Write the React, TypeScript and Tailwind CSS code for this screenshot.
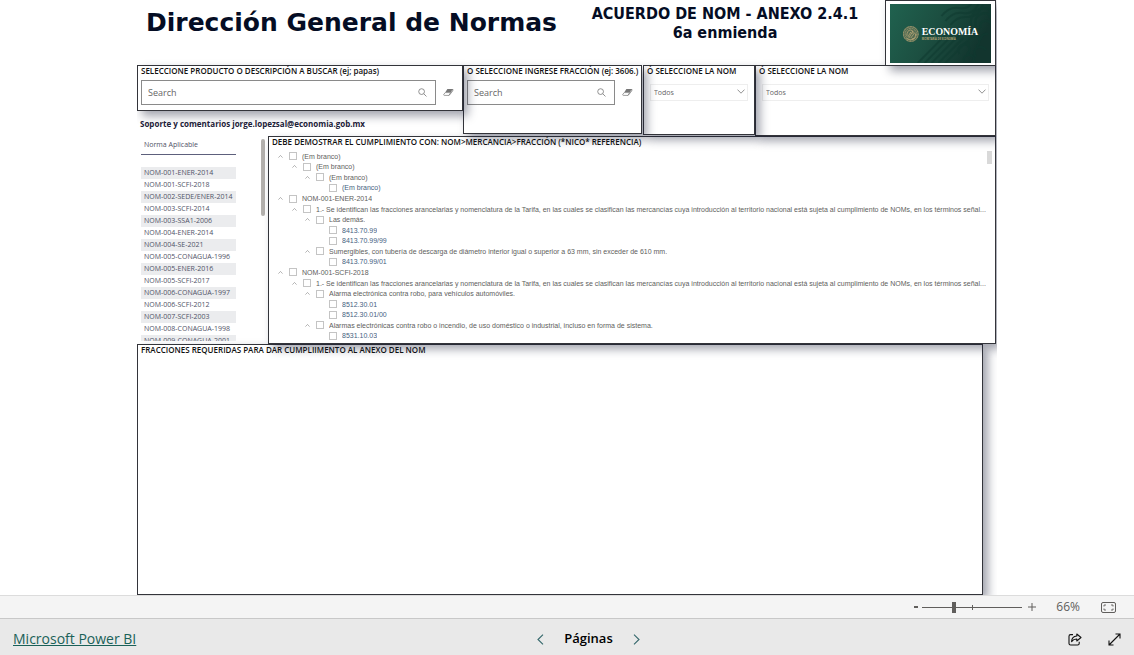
import { useState } from 'react'
import clsx from 'clsx'

interface TreeRow {
  id: number
  level: number
  label: string
  leaf?: boolean
}

const INTRO =
  '1.- Se identifican las fracciones arancelarias y nomenclatura de la Tarifa, en las cuales se clasifican las mercancías cuya introducción al territorio nacional está sujeta al cumplimiento de NOMs, en los términos señal...'

const TREE: TreeRow[] = [
  { id: 1, level: 0, label: '(Em branco)' },
  { id: 2, level: 1, label: '(Em branco)' },
  { id: 3, level: 2, label: '(Em branco)' },
  { id: 4, level: 3, label: '(Em branco)', leaf: true },
  { id: 5, level: 0, label: 'NOM-001-ENER-2014' },
  { id: 6, level: 1, label: INTRO },
  { id: 7, level: 2, label: 'Las demás.' },
  { id: 8, level: 3, label: '8413.70.99', leaf: true },
  { id: 9, level: 3, label: '8413.70.99/99', leaf: true },
  {
    id: 10,
    level: 2,
    label: 'Sumergibles, con tubería de descarga de diámetro interior igual o superior a 63 mm, sin exceder de 610 mm.',
  },
  { id: 11, level: 3, label: '8413.70.99/01', leaf: true },
  { id: 12, level: 0, label: 'NOM-001-SCFI-2018' },
  { id: 13, level: 1, label: INTRO },
  { id: 14, level: 2, label: 'Alarma electrónica contra robo, para vehículos automóviles.' },
  { id: 15, level: 3, label: '8512.30.01', leaf: true },
  { id: 16, level: 3, label: '8512.30.01/00', leaf: true },
  {
    id: 17,
    level: 2,
    label: 'Alarmas electrónicas contra robo o incendio, de uso doméstico o industrial, incluso en forma de sistema.',
  },
  { id: 18, level: 3, label: '8531.10.03', leaf: true },
]

const NORMS = [
  'NOM-001-ENER-2014',
  'NOM-001-SCFI-2018',
  'NOM-002-SEDE/ENER-2014',
  'NOM-003-SCFI-2014',
  'NOM-003-SSA1-2006',
  'NOM-004-ENER-2014',
  'NOM-004-SE-2021',
  'NOM-005-CONAGUA-1996',
  'NOM-005-ENER-2016',
  'NOM-005-SCFI-2017',
  'NOM-006-CONAGUA-1997',
  'NOM-006-SCFI-2012',
  'NOM-007-SCFI-2003',
  'NOM-008-CONAGUA-1998',
  'NOM-009-CONAGUA-2001',
]

const INDENT = ['pl-0', 'pl-[14px]', 'pl-[27px]', 'pl-[40px]']

const PANEL = 'relative border border-[#33343a] bg-white shadow-[5px_5px_9px_rgba(20,24,50,0.4)]'
const PANEL_TITLE = 'font-["Open_Sans",sans-serif] text-[8px] leading-[10px] font-semibold whitespace-nowrap text-[#111]'

function SearchIcon() {
  return (
    <svg viewBox="0 0 10 10" className="size-[9px]" fill="none" stroke="#777" strokeWidth="0.9">
      <circle cx="4" cy="4" r="3.2" />
      <path d="M6.4 6.4 9.4 9.4" />
    </svg>
  )
}

function EraserIcon() {
  return (
    <svg viewBox="0 0 11 9" className="h-[9px] w-[11px]">
      <path d="M4.4 1h5.4L7.6 4.6H2.2z" fill="#777" />
      <path d="M2.2 4.6h5.4L6 7.4H1.2q-.8-.2-.4-1zM7.6 4.6 9.8 1v1.8L6.2 7.4" fill="#fff" stroke="#777" strokeWidth="0.7" />
    </svg>
  )
}

function Chevron({ className }: { className?: string }) {
  return (
    <svg viewBox="0 0 8 5" className={className} fill="none" stroke="currentColor" strokeWidth="0.8">
      <path d="M.5.6 4 4.2 7.5.6" />
    </svg>
  )
}

function SearchPanel({ title, id, className }: { title: string; id: string; className: string }) {
  const [value, setValue] = useState('')
  return (
    <section className={clsx(PANEL, 'pr-2 pl-[3px]', className)}>
      <label htmlFor={id} className={clsx(PANEL_TITLE, 'block')}>
        {title}
      </label>
      <div className="mt-1 flex items-center gap-[7px]">
        <div className="flex h-[25px] min-w-0 flex-1 items-center border border-[#8a8a8a] bg-white pr-2">
          <input
            id={id}
            value={value}
            onChange={(e) => setValue(e.target.value)}
            placeholder="Search"
            className="w-full min-w-0 flex-1 px-[6px] font-['Open_Sans',sans-serif] text-[9px] text-[#444] outline-none placeholder:text-[#666]"
          />
          <button type="button" aria-label="Search">
            <SearchIcon />
          </button>
        </div>
        <button type="button" aria-label="Clear" onClick={() => setValue('')}>
          <EraserIcon />
        </button>
      </div>
    </section>
  )
}

function SelectPanel({ title, id, className }: { title: string; id: string; className: string }) {
  return (
    <section className={clsx(PANEL, 'pr-[6px] pl-[3px]', className)}>
      <label htmlFor={id} className={clsx(PANEL_TITLE, 'block')}>
        {title}
      </label>
      <div className="relative mt-2 ml-[3px]">
        <select
          id={id}
          className="block h-[17px] w-full appearance-none border border-[#eeeeee] px-[3px] pt-px font-['Open_Sans',sans-serif] text-[7px] text-[#666] outline-none"
        >
          <option>Todos</option>
        </select>
        <Chevron className="pointer-events-none absolute top-[5px] right-[3px] h-[5px] w-2 text-[#777]" />
      </div>
    </section>
  )
}

function Logo() {
  return (
    <svg viewBox="0 0 102 59" className="block h-full w-full" preserveAspectRatio="none">
      <defs>
        <linearGradient id="green" x1="0" x2="1" y1="0" y2="0.3">
          <stop offset="0" stopColor="#20624f" />
          <stop offset="0.5" stopColor="#1c4f41" />
          <stop offset="1" stopColor="#12352e" />
        </linearGradient>
      </defs>
      <rect width="102" height="59" fill="url(#green)" />
      <g fill="none" stroke="#0f3a30" strokeWidth="2" opacity="0.55">
        <path d="M28 59 62 25M35 59 66 28M42 59 70 31M49 59 74 34M56 59 78 37" />
        <path d="M52 12q8-10 18-8t14-8M56 17q8-10 18-8t16-10M61 21q7-9 17-8t16-12" />
        <path d="M82 22q-2-14 9-17t10 6M87 23q-3-10 5-13t9 4M92 24q-2-6 3-7t7 3" />
        <path d="M70 50q-3-7 3-9t7 3-3 6M80 42q-3-7 3-9t7 3-3 6M75 58q-2-6 4-7t6 7M87 53q-4-6 1-9t9 2M91 36q2-7 8-6" />
      </g>
      <circle cx="21" cy="30" r="8" fill="#536c53" />
      <g fill="none" stroke="#b7a576">
        <circle cx="21" cy="30" r="7.4" strokeWidth="1" strokeDasharray="1 0.6" />
        <circle cx="21" cy="30" r="5.7" strokeWidth="0.6" strokeDasharray="2 0.7" />
        <path
          d="M17 32q0-6 4-6l2 1-1 2q4-1 4 2 0 4-4 4M18 33l3-5M19 34l3-5M21 34l3-4M16.5 34.5q4 3 8.5 0M22 27l2 1"
          strokeWidth="0.8"
        />
      </g>
      <text x="32" y="31" fill="#fff" fontFamily="'Liberation Serif', serif" fontSize="10" fontWeight="700">
        ECONOMÍA
      </text>
      <text x="32" y="36" fill="#b7a576" fontFamily="'Open Sans', sans-serif" fontSize="2.6" fontWeight="700">
        SECRETARÍA DE ECONOMÍA
      </text>
    </svg>
  )
}

function NormTable() {
  return (
    <div className="flex w-[131px] shrink-0 justify-between pt-[3px] pr-[3px] pb-[3px] pl-1">
      <div className="h-[202px] w-[95px] overflow-hidden">
        <table className="w-full border-collapse font-['Open_Sans',sans-serif] text-[7px] leading-[12px] text-[#4f5266]">
          <thead>
            <tr>
              <th className="h-[15px] border-b border-[#5d607c] px-[3px] py-0 text-left align-top font-normal">
                Norma Aplicable
              </th>
            </tr>
            <tr aria-hidden="true">
              <td className="h-[13px] p-0" />
            </tr>
          </thead>
          <tbody>
            {NORMS.map((norm) => (
              <tr key={norm} className="odd:bg-[#ebecee]">
                <td className="h-3 px-[3px] py-0 whitespace-nowrap">{norm}</td>
              </tr>
            ))}
          </tbody>
        </table>
      </div>
      <div className="h-[77px] w-1 rounded-full bg-[#b3b0ad]" />
    </div>
  )
}

function TreePanel() {
  return (
    <section className={clsx(PANEL, 'flex min-w-0 flex-1 flex-col pl-[3px]')}>
      <h2 className={PANEL_TITLE}>DEBE DEMOSTRAR EL CUMPLIMIENTO CON: NOM&gt;MERCANCIA&gt;FRACCIÓN (*NICO* REFERENCIA)</h2>
      <div className="flex flex-1 pt-1 pb-0.5">
        <ul className="flex min-w-0 flex-1 flex-col pl-[6px] font-['Liberation_Sans',sans-serif] text-[7px] leading-[9px] text-[#605e5c]">
          {TREE.map((row) => (
            <li key={row.id} className={clsx('flex flex-1 items-center', INDENT[row.level])}>
              <button type="button" aria-label="Expand" className={clsx('w-[11px] shrink-0', row.leaf && 'invisible')}>
                <Chevron className="h-[3px] w-[5px] rotate-180 text-[#666]" />
              </button>
              <label className="flex min-w-0 items-center gap-[5px]">
                <input type="checkbox" className="size-[8px] shrink-0 appearance-none border border-[#c4c4c4] checked:bg-[#666]" />
                <span className={clsx('truncate', row.level === 3 && 'text-[#46627f]')}>{row.label}</span>
              </label>
            </li>
          ))}
        </ul>
        <div className="-ml-[5px] w-2 shrink-0">
          <div className="h-[13px] w-[5px] bg-[#d9d9d9]" />
        </div>
      </div>
    </section>
  )
}

function ZoomBar() {
  const [zoom, setZoom] = useState(66)
  return (
    <div className="flex h-[23px] items-center justify-end border-t border-[#dcdcdc] bg-[#f4f4f4] pr-[18px] font-['Open_Sans',sans-serif] text-[#605e5c]">
      <button type="button" aria-label="Zoom out" className="h-0.5 w-1 bg-[#605e5c]" onClick={() => setZoom((z) => z - 10)} />
      <div className="relative ml-1 flex h-4 w-[100px] items-center">
        <span className="absolute top-[6px] left-1/2 h-[5px] w-px bg-[#605e5c]" />
        <input
          type="range"
          min={10}
          max={190}
          value={zoom}
          onChange={(e) => setZoom(Number(e.target.value))}
          aria-label="Zoom"
          className="h-px w-full appearance-none bg-[#605e5c] [&::-webkit-slider-thumb]:h-[11px] [&::-webkit-slider-thumb]:w-1 [&::-webkit-slider-thumb]:appearance-none [&::-webkit-slider-thumb]:bg-[#605e5c]"
        />
      </div>
      <button type="button" aria-label="Zoom in" className="ml-[6px]" onClick={() => setZoom((z) => z + 10)}>
        <svg viewBox="0 0 8 8" className="size-2" stroke="currentColor" strokeWidth="1">
          <path d="M4 0v8M0 4h8" />
        </svg>
      </button>
      <span className="ml-5 text-xs">{zoom}%</span>
      <button type="button" aria-label="Fit to page" className="ml-[21px]">
        <svg viewBox="0 0 15 11" className="h-[11px] w-[15px]" fill="none" stroke="currentColor">
          <rect x=".5" y=".5" width="14" height="10" rx="1.5" />
          <path d="M5 3H3v1.5M3 6.5V8h2M10 3h2v1.5M12 6.5V8h-2" strokeWidth="0.9" />
        </svg>
      </button>
    </div>
  )
}

function Footer() {
  return (
    <footer className="grid h-[37px] grid-cols-[1fr_auto_1fr] items-center border-t border-[#c8c8c8] bg-[#e9e9e9] px-[13px] pt-1 font-['Open_Sans',sans-serif] text-[13px]">
      <a href="https://powerbi.microsoft.com" className="justify-self-start text-sm text-[#1a6158] underline">
        Microsoft Power BI
      </a>
      <nav className="ml-[43px] flex items-center gap-5">
        <button type="button" aria-label="Previous page">
          <svg viewBox="0 0 7 11" className="h-[11px] w-[7px]" fill="none" stroke="#35686c" strokeWidth="1.1">
            <path d="M6 .7 1 5.5 6 10.3" />
          </svg>
        </button>
        <span className="font-semibold text-black">Páginas</span>
        <button type="button" aria-label="Next page">
          <svg viewBox="0 0 7 11" className="h-[11px] w-[7px]" fill="none" stroke="#35686c" strokeWidth="1.1">
            <path d="M1 .7 6 5.5 1 10.3" />
          </svg>
        </button>
      </nav>
      <div className="flex items-center gap-[26px] justify-self-end">
        <button type="button" aria-label="Share">
          <svg viewBox="0 0 14 13" className="h-[13px] w-[14px]" fill="none" stroke="#111" strokeWidth="1.1" strokeLinejoin="round">
            <path d="M5 1.6H2.6Q1 1.6 1 3.2v7.2Q1 12 2.6 12h7Q11.2 12 11.2 10.4V8.8" />
            <path d="M8.8 1 13 4.5 8.8 8V6Q5.5 5.9 3.6 8.6 3.8 3.4 8.8 3z" />
          </svg>
        </button>
        <button type="button" aria-label="Full screen">
          <svg viewBox="0 0 13 13" className="size-[13px]" fill="none" stroke="#111" strokeWidth="1.1">
            <path d="M1 12 12 1M7.5 1H12v4.5M1 7.5V12h4.5" />
          </svg>
        </button>
      </div>
    </footer>
  )
}

export default function App() {
  return (
    <div className="flex min-h-screen flex-col bg-white">
      <main className="mx-auto flex w-full max-w-[860px] flex-1 flex-col overflow-hidden pr-px">
        <header className="flex h-[65px] font-['DejaVu_Sans',sans-serif] font-bold text-[#050d24]">
          <h1 className="pt-[6px] pl-[9px] text-[25px] leading-[34px] whitespace-nowrap">Dirección General de Normas</h1>
          <p className="flex-1 pt-1 pl-2 text-center font-['DejaVu_Sans_Condensed','DejaVu_Sans',sans-serif] text-base leading-[19px] whitespace-nowrap">
            ACUERDO DE NOM - ANEXO 2.4.1
            <br />
            6a enmienda
          </p>
          <div className={clsx(PANEL, 'z-50 h-[66px] w-[111px] shrink-0 px-1 pt-[3px] pb-0.5')}>
            <Logo />
          </div>
        </header>

        <div className="flex">
          <div className="w-[326px] shrink-0">
            <SearchPanel
              id="producto"
              title="SELECCIONE PRODUCTO O DESCRIPCIÓN A BUSCAR (ej; papas)"
              className="z-40 h-[46px]"
            />
            <p className="mt-[7px] pl-[3px] font-['Open_Sans',sans-serif] text-[8px] leading-3 font-bold text-[#1c2138]">
              Soporte y comentarios jorge.lopezsal@economia.gob.mx
            </p>
          </div>
          <SearchPanel
            id="fraccion"
            title="O SELECCIONE INGRESE FRACCIÓN (ej: 3606.)"
            className="z-30 mr-px h-[69px] w-[179px] shrink-0"
          />
          <SelectPanel id="nom" title="Ó SELECCIONE LA NOM" className="z-20 h-[70px] w-[112px] shrink-0" />
          <SelectPanel id="nom-detalle" title="Ó SELECCIONE LA NOM" className="z-10 h-[71px] min-w-0 flex-1" />
        </div>

        <div className="relative z-[5] flex">
          <NormTable />
          <TreePanel />
        </div>

        <section className={clsx(PANEL, 'mr-[13px] flex-1 pl-[3px]')}>
          <h2 className={PANEL_TITLE}>FRACCIONES REQUERIDAS PARA DAR CUMPLIIMENTO AL ANEXO DEL NOM</h2>
        </section>
      </main>
      <ZoomBar />
      <Footer />
    </div>
  )
}
